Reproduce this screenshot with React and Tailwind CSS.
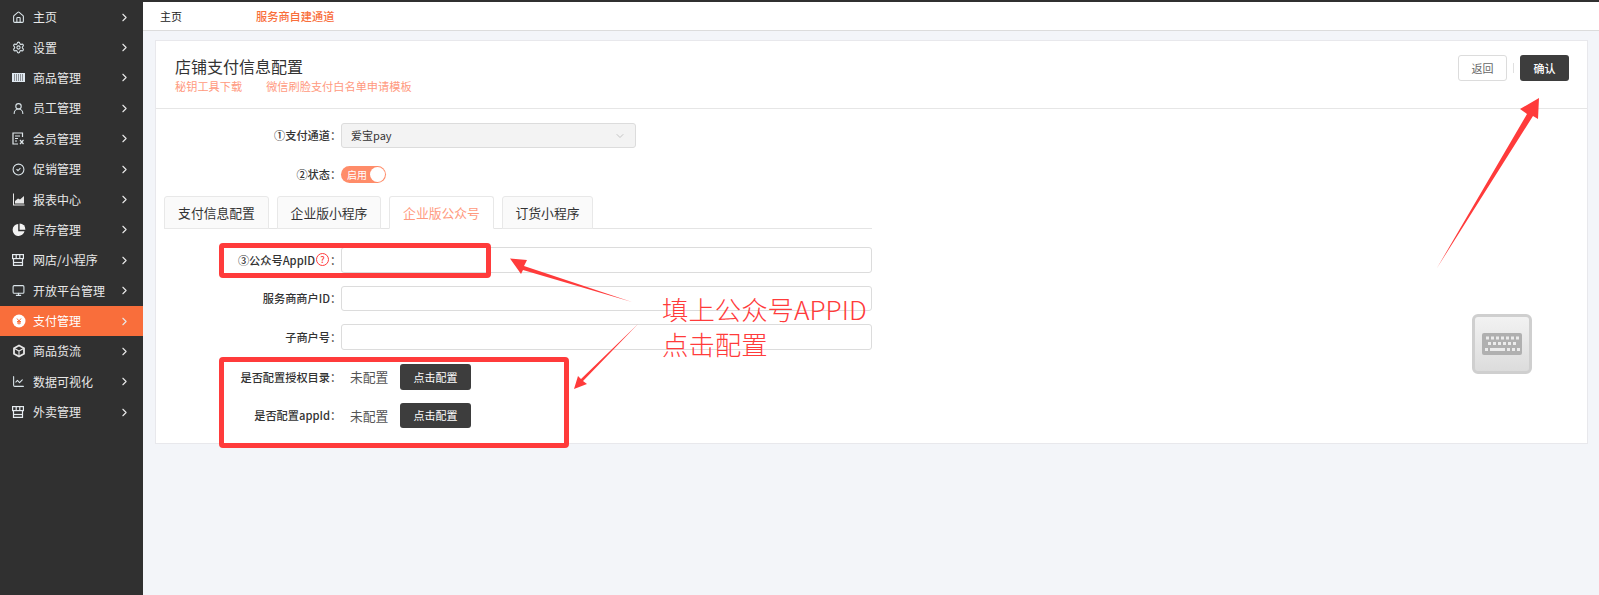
import React from 'react';
import { House, Settings, UserRound, CircleCheck, Monitor, ChevronRight, ChevronDown, ChartLine } from 'lucide-react';

const font = { fontFamily: '"Noto Sans CJK SC", "Liberation Sans", sans-serif' };

const Barcode = () => (
  <svg width="13" height="9" viewBox="0 0 13 9">
    <rect width="13" height="9" fill="#dfe8f0" />
    {[2, 4, 6, 8, 10].map((x) => <rect key={x} x={x} y="1" width="1" height="7" fill="#8b8f94" />)}
  </svg>
);
const ShopIcon = () => (
  <svg width="12" height="12" viewBox="0 0 12 12" fill="none" stroke="#e6ecf0" strokeWidth="1.200">
    <rect x="0.600" y="0.600" width="10.800" height="4" />
    <path d="M1.500 4.600V11.400H10.500V4.600M4.200 0.600V4.600M7.800 0.600V4.600" />
    <path d="M1.500 8.500H10.500" />
  </svg>
);
const MemberIcon = () => (
  <svg width="13" height="13" viewBox="0 0 13 13" fill="none" stroke="#dfe6ea" strokeWidth="1.2">
    <path d="M10.5 5V1H1v11h5" />
    <path d="M3 4h5M3 6.5h3M3 9h2" />
    <path d="M8 8l3.5 4M11.5 8L8 12" />
  </svg>
);
const AreaIcon = () => (
  <svg width="13" height="13" viewBox="0 0 13 13" fill="#e6e6e6">
    <path d="M1 0.5h1V11.5h10.5v1H1z" />
    <path d="M3 10.5V8l3-2.5 2 1L12 3v7.5z" />
  </svg>
);
const PieIcon = () => (
  <svg width="14" height="14" viewBox="0 0 14 14" fill="#f2f2f2">
    <path d="M6.2 1a6 6 0 1 0 6.3 7.2H6.2z" />
    <path d="M7.6 0.4a6 6 0 0 1 5.8 6.4H7.6z" />
  </svg>
);
const PayIcon = () => (
  <svg width="14" height="14" viewBox="0 0 14 14">
    <circle cx="7" cy="7" r="6.5" fill="#fff" />
    <path d="M5 4.5L7 7l2-2.5M5 7.5h4M5 9h4M7 7v3.5" stroke="#f96e3b" strokeWidth="1" fill="none" />
  </svg>
);
const CubeIcon = () => (
  <svg width="14" height="14" viewBox="0 0 14 14" fill="none" stroke="#e6e6e6" strokeWidth="1.8">
    <path d="M7 1.5l5 2.8v5.4l-5 2.8-5-2.8V4.300z" />
    <path d="M2.500 4.500L7 7l4.500-2.500M7 7v5" strokeWidth="1.1" />
  </svg>
);

const menus = [
  { name: '主页', icon: <House size={13} color="#dbe5ea" /> },
  { name: '设置', icon: <Settings size={13} color="#dbe5ea" /> },
  { name: '商品管理', icon: <Barcode /> },
  { name: '员工管理', icon: <UserRound size={13} color="#dbe5ea" /> },
  { name: '会员管理', icon: <MemberIcon /> },
  { name: '促销管理', icon: <CircleCheck size={13} color="#dbe5ea" /> },
  { name: '报表中心', icon: <AreaIcon /> },
  { name: '库存管理', icon: <PieIcon /> },
  { name: '网店/小程序', icon: <ShopIcon /> },
  { name: '开放平台管理', icon: <Monitor size={13} color="#dbe5ea" /> },
  { name: '支付管理', icon: <PayIcon />, active: true },
  { name: '商品货流', icon: <CubeIcon /> },
  { name: '数据可视化', icon: <ChartLine size={13} color="#dbe5ea" /> },
  { name: '外卖管理', icon: <ShopIcon /> },
];

const tabs = [
  { name: '支付信息配置', w: 'w-[105px]' },
  { name: '企业版小程序', w: 'w-[104px]' },
  { name: '企业版公众号', w: 'w-[105px]', active: true },
  { name: '订货小程序', w: 'w-[91px]' },
];

const Sidebar = () => (
  <div className="w-[143px] shrink-0 bg-[#303030] h-full">
    {menus.map((m) => (
      <div key={m.name} className={`h-[30.4px] flex items-center pl-[12px] pr-[12px] text-[12px] text-[#e8e8e8] ${m.active ? 'bg-[#f96e3b] text-white' : ''}`}>
        <span className="w-[21px] flex items-center shrink-0">{m.icon}</span>
        <span className="flex-1">{m.name}</span>
        <ChevronRight size={13} color="#e8e8e8" strokeWidth={2} />
      </div>
    ))}
  </div>
);

const Label = ({ children }) => (
  <div className="w-[180px] shrink-0 text-right text-[11.2px] font-medium text-[#333]">
    {children}<span className="inline-block w-[6px] text-left">：</span>
  </div>
);

const Input = ({ h }) => (
  <div className={`w-[531px] ${h} ml-[5px] border border-[#dcdcdc] rounded-[3px] bg-white`} />
);

// annotation layer: the red marks were painted over the screenshot
const Annotations = () => (
  <>
    <div className="absolute left-[219px] top-[243px] w-[272px] h-[35px] border-[5px] border-[#ff3b3b] rounded-[4px]" />
    <div className="absolute left-[219px] top-[357px] w-[350px] h-[91px] border-[5px] border-[#ff3b3b] rounded-[4px]" />
    <svg className="absolute left-0 top-0" width="1599" height="595" fill="#ff3b3b">
      <path d="M632 302L524 266L527 260L510 258.500L521 274L523 270z" />
      <path d="M638 324L583 381L587 384L574 389L578 376L581 379z" />
      <path d="M1437 268L1527 114L1520 109L1539 98L1538 119L1533 116z" />
    </svg>
    <div className="absolute left-[662px] top-[291px] text-[26.400px] leading-[35px] font-light text-[#ff3b3b] whitespace-nowrap">
      <div>填上公众号APPID</div>
      <div>点击配置</div>
    </div>
    <div className="absolute left-[1472px] top-[314px] w-[60px] h-[60px] rounded-[6px] border-[3px] border-[#cfcfcf] bg-gradient-to-b from-[#f2f2f2] to-[#dcdcdc] flex items-center justify-center">
      <svg width="40" height="22" viewBox="0 0 40 22">
        <rect width="40" height="22" rx="2" fill="#b0b0b0" />
        {[0, 1, 2, 3, 4, 5, 6].map((i) => <rect key={i} x={4 + i * 5} y="3.500" width="3" height="3" fill="#ececec" />)}
        {[0, 1, 2, 3, 4, 5].map((i) => <rect key={i} x={6 + i * 5} y="9" width="3" height="3" fill="#ececec" />)}
        <rect x="3" y="15" width="3" height="3" fill="#ececec" />
        <rect x="8" y="15" width="15" height="3" fill="#ececec" />
        {[0, 1, 2].map((i) => <rect key={i} x={25 + i * 5} y="15" width="3" height="3" fill="#ececec" />)}
      </svg>
    </div>
  </>
);

const App = () => (
  <div className="relative w-[1599px] h-[595px] overflow-hidden bg-[#f3f5f9] flex flex-col" style={font}>
    <div className="relative z-10 h-[2px] shrink-0 bg-[#303030] shadow-md" />
    <div className="flex-1 flex min-h-0">
      <Sidebar />
      <div className="flex-1 min-w-0">
        <div className="h-[29px] bg-white border-b border-[#dcdcdc] flex items-center text-[11px] pl-[17px]">
          <span className="w-[96px] text-[#222]">主页</span>
          <span className="text-[11.2px] text-[#f96e3b] font-medium">服务商自建通道</span>
        </div>
        <div className="pl-[12px] pr-[11px] pt-[9px]">
          <div className="h-[404px] bg-white border border-[#e8e8ec]">
            <div className="h-[68px] border-b border-[#e6e6e6] flex items-start justify-between pl-[19px] pr-[18px]">
              <div className="pt-[13px]">
                <div className="text-[16px] leading-[24px] text-[#333]">店铺支付信息配置</div>
                <div className="text-[11.2px] leading-[14px] mt-[1px] text-[#ff9a80] flex gap-[24px]">
                  <span>秘钥工具下载</span>
                  <span>微信刷脸支付白名单申请模板</span>
                </div>
              </div>
              <div className="flex items-center pt-[14px] text-[11px]">
                <div className="w-[49px] h-[26px] border border-[#dcdcdc] rounded-[3px] flex items-center justify-center text-[#666]">返回</div>
                <div className="w-px h-[10px] bg-[#e0e0e0] mx-[6px]" />
                <div className="w-[49px] h-[26px] bg-[#3d3d3d] rounded-[3px] flex items-center justify-center text-white font-medium">确认</div>
              </div>
            </div>

            <div className="pt-[14px]">
              <div className="flex items-center">
                <Label>①支付通道</Label>
                <div className="w-[295px] h-[25px] ml-[5px] bg-[#f3f3f3] border border-[#dcdcdc] rounded-[3px] flex items-center justify-between pl-[9px] pr-[9px] text-[11px] text-[#333]">
                  <span>爱宝pay</span>
                  <ChevronDown size={12} color="#c4c4c4" />
                </div>
              </div>

              <div className="flex items-center mt-[18px]">
                <Label>②状态</Label>
                <div className="relative w-[45px] h-[17px] ml-[5px] rounded-full bg-[#ff8c69] text-[10px] leading-[17px] text-white pl-[6px]">
                  启用
                  <div className="absolute right-[1px] top-[1px] w-[15px] h-[15px] rounded-full bg-white" />
                </div>
              </div>

              <div className="ml-[8px] w-[708px] h-[33px] mt-[13px] border-b border-[#e4e4e4] flex gap-[8px]">
                {tabs.map((t) => (
                  <div key={t.name} className={`${t.w} h-[33px] border border-[#e8e8e8] rounded-t-[3px] flex items-center justify-center text-[12.800px] ${t.active ? 'bg-white border-b-white text-[#ff9a80]' : 'bg-[#fafafa] text-[#333]'}`}>
                    {t.name}
                  </div>
                ))}
              </div>

              <div className="flex items-center mt-[18px]">
                <Label>
                  <span className="inline-flex items-center">③公众号AppID<span className="ml-[1px] mr-[1px] w-[13px] h-[13px] rounded-full border border-[#ff3b3b] text-[#ff3b3b] text-[9px] leading-[11px] text-center">?</span></span>
                </Label>
                <Input h="h-[26px]" />
              </div>
              <div className="flex items-center mt-[13px]">
                <Label>服务商商户ID</Label>
                <Input h="h-[25px]" />
              </div>
              <div className="flex items-center mt-[13px]">
                <Label>子商户号</Label>
                <Input h="h-[26px]" />
              </div>

              <div className="flex items-center mt-[14px]">
                <Label>是否配置授权目录</Label>
                <span className="ml-[14px] w-[50px] text-[12.800px] text-[#555]">未配置</span>
                <div className="w-[71px] h-[26px] bg-[#3d3d3d] rounded-[3px] flex items-center justify-center text-[11px] text-white">点击配置</div>
              </div>
              <div className="flex items-center mt-[13px]">
                <Label>是否配置appId</Label>
                <span className="ml-[14px] w-[50px] text-[12.800px] text-[#555]">未配置</span>
                <div className="w-[71px] h-[25px] bg-[#3d3d3d] rounded-[3px] flex items-center justify-center text-[11px] text-white">点击配置</div>
              </div>
            </div>
          </div>
        </div>
      </div>
    </div>
    <Annotations />
  </div>
);

export default App;
